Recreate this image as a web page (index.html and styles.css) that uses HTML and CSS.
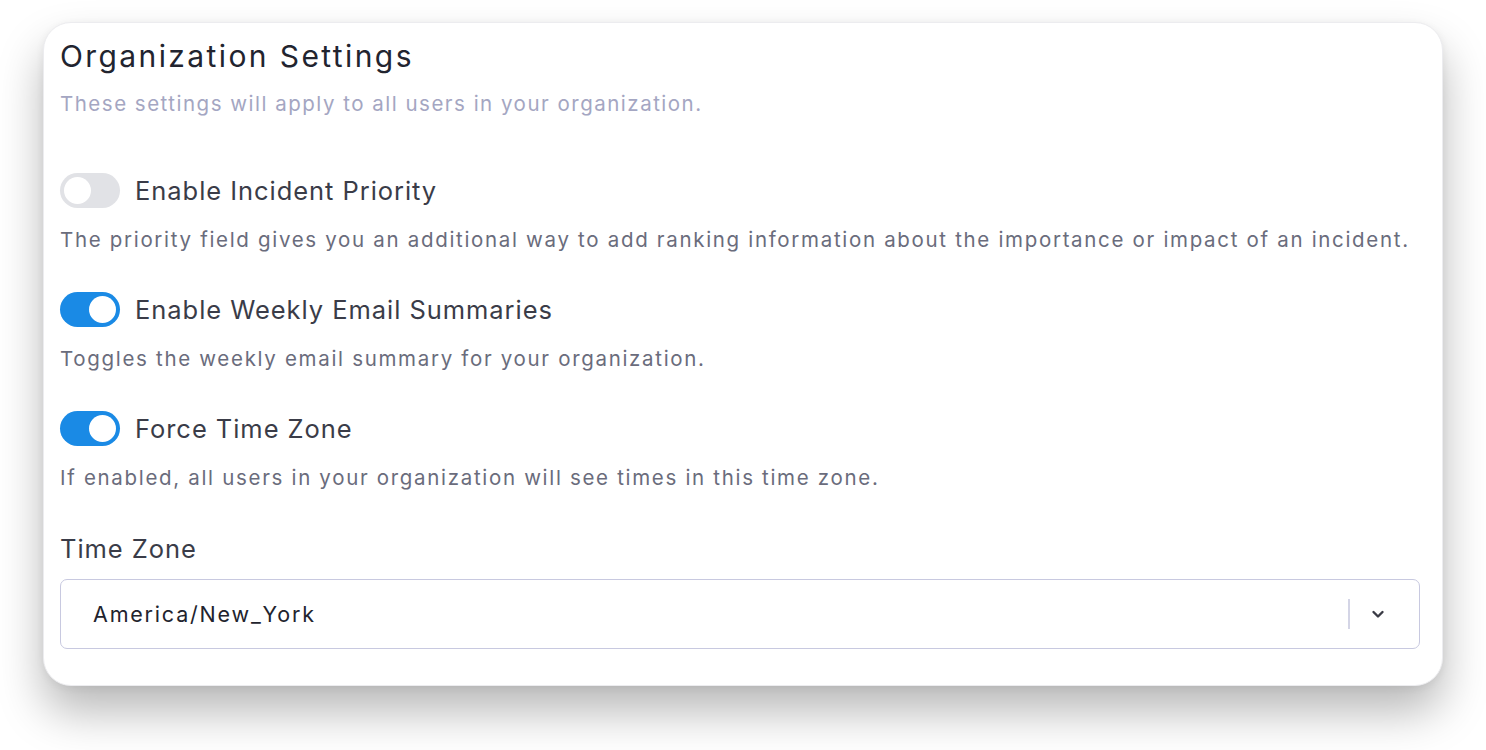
FILE: index.html
```html
<!DOCTYPE html>
<html lang="en">
<head>
    <meta charset="UTF-8">
    <meta name="viewport" content="width=device-width, initial-scale=1.0">
    <title>Organization Settings</title>
    <link rel="stylesheet" href="styles.css">
</head>
<body>
    <div class="tarjeta">
        <h1>Organization Settings</h1>
        <p class="subtitulo">These settings will apply to all users in your organization.</p>

        <div class="ajuste">
            <div class="fila">
                <span class="interruptor"><span class="bola"></span></span>
                <span class="etiqueta">Enable Incident Priority</span>
            </div>
            <p class="descripcion">The priority field gives you an additional way to add ranking information about the importance or impact of an incident.</p>
        </div>

        <div class="ajuste">
            <div class="fila">
                <span class="interruptor activo"><span class="bola"></span></span>
                <span class="etiqueta">Enable Weekly Email Summaries</span>
            </div>
            <p class="descripcion">Toggles the weekly email summary for your organization.</p>
        </div>

        <div class="ajuste">
            <div class="fila">
                <span class="interruptor activo"><span class="bola"></span></span>
                <span class="etiqueta">Force Time Zone</span>
            </div>
            <p class="descripcion">If enabled, all users in your organization will see times in this time zone.</p>
        </div>

        <div class="campo">
            <span class="etiqueta">Time Zone</span>
            <div class="selector">
                <span class="valor">America/New_York</span>
                <span class="separador"></span>
                <svg class="flecha" width="14" height="10" viewBox="0 0 14 10"><path d="M2.5 3l4.5 4.5 4.5-4.5" fill="none" stroke="#3a3b45" stroke-width="2.4" stroke-linecap="round" stroke-linejoin="round"/></svg>
            </div>
        </div>
    </div>
</body>
</html>
```

FILE: styles.css
```css
*{
    padding: 0;
    margin: 0;
    box-sizing: border-box;
    font-family: Inter, "Open Sans", sans-serif;
}
html{
    background-color: white;
}
body{
    background-color: white;
    min-height: 100vh;
    padding: 22px 43px 64px 43px;
}
.tarjeta{
    width: 1400px;
    height: 664px;
    background-color: white;
    border-radius: 28px;
    border: 1px solid #ececef;
    box-shadow: 0 26px 46px rgba(0,0,0,0.28), 0 2px 8px rgba(0,0,0,0.06);
    padding: 13px 22px 0 16px;
}
h1{
    font-size: 30px;
    font-weight: 400;
    color: #22242f;
    line-height: 40px;
    letter-spacing: 2.4px;
}
.subtitulo{
    margin-top: 15px;
    font-size: 20.5px;
    color: #a4a6c2;
    line-height: 26px;
    letter-spacing: 1.5px;
}
.ajuste{
    margin-top: 56px;
}
.ajuste + .ajuste{
    margin-top: 38px;
}
.fila{
    display: flex;
    align-items: center;
    gap: 15px;
}
.interruptor{
    width: 60px;
    height: 35px;
    border-radius: 18px;
    background-color: #e1e2e6;
    display: flex;
    align-items: center;
    padding: 0 4px;
}
.bola{
    width: 27px;
    height: 27px;
    border-radius: 50%;
    background-color: white;
}
.activo{
    background-color: #1a8ae5;
    justify-content: flex-end;
}
.etiqueta{
    font-size: 25.5px;
    color: #3a3c48;
    line-height: 34px;
    letter-spacing: 0.95px;
}
.descripcion{
    margin-top: 18px;
    font-size: 20.5px;
    color: #6a6c7c;
    line-height: 28px;
    letter-spacing: 1.68px;
}
.campo{
    margin-top: 40px;
}
.campo .etiqueta{
    display: block;
}
.selector{
    margin-top: 13px;
    height: 70px;
    border: 1.5px solid #c8c9e0;
    border-radius: 7px;
    display: flex;
    align-items: center;
    padding: 0 34px 0 32px;
}
.valor{
    flex: 1;
    font-size: 21.5px;
    color: #22232d;
    letter-spacing: 1.8px;
}
.separador{
    width: 2px;
    height: 30px;
    background-color: #d4d5e6;
    margin-right: 21px;
}
.flecha{
    display: block;
}
```
